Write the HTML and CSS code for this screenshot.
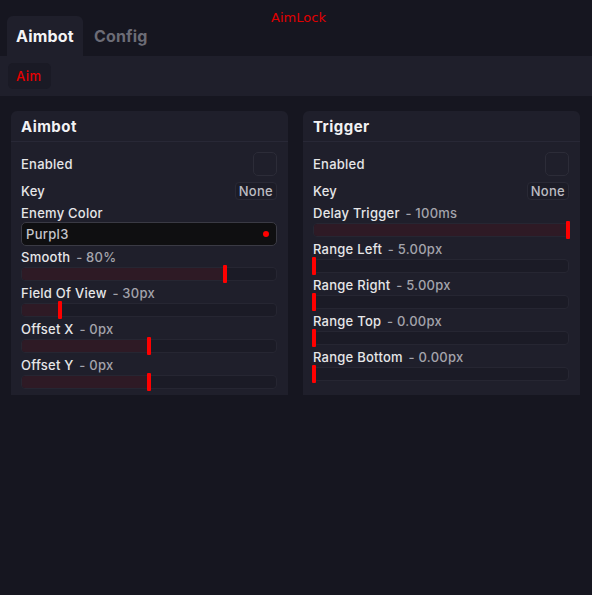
FILE: index.html
```html
<!DOCTYPE html>
<html>
<head>
<meta charset="utf-8">
<link rel="stylesheet" href="styles.css">
</head>
<body>
<div class="app">
  <div class="title">AimLock</div>
  <div class="tabs">
    <div class="tab active">Aimbot</div>
    <div class="tab">Config</div>
  </div>
  <div class="subbar"><div class="chip">Aim</div></div>
  <div class="panels">
    <section class="panel">
      <div class="panel-head">Aimbot</div>
      <div class="panel-body">
        <div class="row check-row"><span class="label">Enabled</span><span class="checkbox"></span></div>
        <div class="row key-row"><span class="label">Key</span><span class="keybtn">None</span></div>
        <div class="field">
          <div class="label">Enemy Color</div>
          <div class="input"><span>Purpl3</span><span class="dot"></span></div>
        </div>
        <div class="slider">
          <div class="label">Smooth <span class="val">- 80%</span></div>
          <div class="track"><div class="fill" style="width:80%"></div><div class="thumb" style="left:80%"></div></div>
        </div>
        <div class="slider">
          <div class="label">Field Of View <span class="val">- 30px</span></div>
          <div class="track"><div class="fill" style="width:15%"></div><div class="thumb" style="left:15%"></div></div>
        </div>
        <div class="slider">
          <div class="label">Offset X <span class="val">- 0px</span></div>
          <div class="track"><div class="fill" style="width:50%"></div><div class="thumb" style="left:50%"></div></div>
        </div>
        <div class="slider">
          <div class="label">Offset Y <span class="val">- 0px</span></div>
          <div class="track"><div class="fill" style="width:50%"></div><div class="thumb" style="left:50%"></div></div>
        </div>
      </div>
    </section>
    <section class="panel">
      <div class="panel-head">Trigger</div>
      <div class="panel-body">
        <div class="row check-row"><span class="label">Enabled</span><span class="checkbox"></span></div>
        <div class="row key-row"><span class="label">Key</span><span class="keybtn">None</span></div>
        <div class="slider">
          <div class="label">Delay Trigger <span class="val">- 100ms</span></div>
          <div class="track"><div class="fill" style="width:100%"></div><div class="thumb" style="left:100%"></div></div>
        </div>
        <div class="slider">
          <div class="label">Range Left <span class="val">- 5.00px</span></div>
          <div class="track"><div class="fill" style="width:0%"></div><div class="thumb" style="left:0%"></div></div>
        </div>
        <div class="slider">
          <div class="label">Range Right <span class="val">- 5.00px</span></div>
          <div class="track"><div class="fill" style="width:0%"></div><div class="thumb" style="left:0%"></div></div>
        </div>
        <div class="slider">
          <div class="label">Range Top <span class="val">- 0.00px</span></div>
          <div class="track"><div class="fill" style="width:0%"></div><div class="thumb" style="left:0%"></div></div>
        </div>
        <div class="slider">
          <div class="label">Range Bottom <span class="val">- 0.00px</span></div>
          <div class="track"><div class="fill" style="width:0%"></div><div class="thumb" style="left:0%"></div></div>
        </div>
      </div>
    </section>
  </div>
</div>
</body>
</html>
```
FILE: styles.css
```css
* { box-sizing: border-box; }
html, body {
  margin: 0;
  padding: 0;
  background: #161620;
}
body {
  width: 592px;
  height: 595px;
  font-family: Inter, "Open Sans", sans-serif;
  color: #e6e6e8;
  overflow: hidden;
}
.app {
  position: relative;
  height: 595px;
}
.title {
  position: absolute;
  top: 9px;
  left: 0;
  right: 0;
  text-align: center;
  font-family: "DejaVu Sans", Verdana, sans-serif;
  font-size: 13px;
  line-height: 18px;
  color: #e00000;
  padding-left: 5px;
}
.tabs {
  display: flex;
  padding: 16px 0 0 7px;
}
.tab {
  height: 40px;
  padding: 0 9px;
  font-size: 16px;
  font-weight: 700;
  line-height: 40px;
  color: #6c6c76;
  letter-spacing: 0.2px;
  border-radius: 6px 6px 0 0;
  margin-right: 2px;
}
.tab.active {
  background: #1f1f2b;
  color: #f4f4f6;
}
.subbar {
  height: 40px;
  background: #1f1f2b;
  padding: 7px 8px;
  display: flex;
}
.chip {
  height: 26px;
  padding: 0 9px 0 8px;
  border-radius: 5px;
  background: #1a1a25;
  color: #e60000;
  font-size: 13px;
  font-weight: 500;
  line-height: 26px;
  letter-spacing: 0.5px;
}
.panels {
  display: grid;
  grid-template-columns: 277px 277px;
  column-gap: 15px;
  padding-left: 11px;
  margin-top: 15px;
}
.panel {
  background: #1f1f2b;
  border-radius: 6px 6px 0 0;
  padding-bottom: 6px;
}
.panel-head {
  height: 31px;
  padding: 0 10px;
  font-size: 15px;
  font-weight: 700;
  line-height: 31px;
  color: #f2f2f4;
  letter-spacing: 0.45px;
  border-bottom: 1px solid #282836;
}
.panel-body {
  padding: 10px 11px 0 10px;
  display: flex;
  flex-direction: column;
}
.label {
  font-size: 13px;
  font-weight: 500;
  line-height: 18px;
  color: #e6e6e8;
  letter-spacing: 0.25px;
  white-space: nowrap;
}
.val {
  color: #a4a4ac;
  margin-left: 2px;
}
.row {
  display: flex;
  align-items: center;
  justify-content: space-between;
}
.check-row {
  height: 24px;
  margin-bottom: 6px;
}
.checkbox {
  width: 24px;
  height: 24px;
  border: 1px solid #2c2c38;
  border-radius: 5px;
  background: #1f1f2b;
}
.key-row {
  height: 18px;
  margin-bottom: 4px;
}
.keybtn {
  height: 18px;
  padding: 0 3px;
  border: 1px solid #292935;
  border-radius: 4px;
  background: #1c1c27;
  color: #bcbcc2;
  font-size: 13px;
  font-weight: 500;
  line-height: 16px;
  letter-spacing: 0.3px;
}
.field .input {
  height: 24px;
  border: 1px solid #3a3a44;
  border-radius: 5px;
  background: #0f0f11;
  display: flex;
  align-items: center;
  justify-content: space-between;
  padding: 0 7px 0 4px;
  color: #c6c6cc;
  font-size: 13px;
  font-weight: 500;
  letter-spacing: 0.3px;
}
.dot {
  width: 6px;
  height: 6px;
  border-radius: 50%;
  background: #ff0000;
}
.field + .slider { margin-top: 2px; }
.slider + .slider { margin-top: 3px; }
.track {
  position: relative;
  margin-top: 1px;
  height: 14px;
  border: 1px solid #262632;
  border-radius: 4px;
  background: #1b1b26;
}
.fill {
  position: absolute;
  left: 0;
  top: 0;
  bottom: 0;
  background: #2e1a25;
  border-radius: 3px 0 0 3px;
}
.thumb {
  position: absolute;
  top: -3px;
  width: 4px;
  height: 18px;
  margin-left: -2px;
  background: #ff0000;
  border-radius: 1px;
}
```
